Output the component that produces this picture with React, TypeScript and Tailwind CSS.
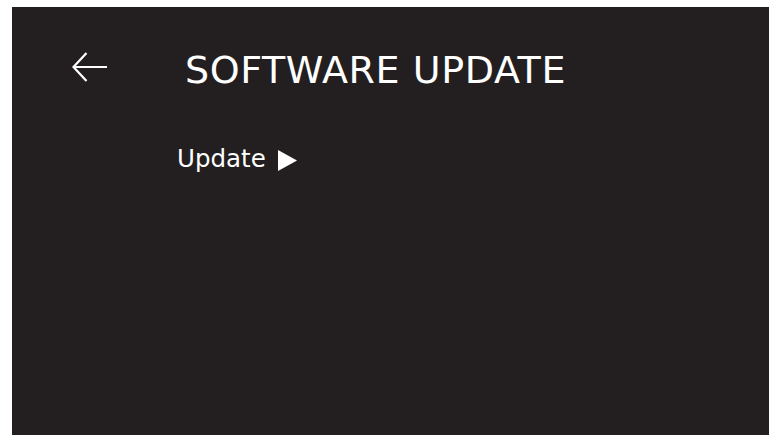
import React from "react";

const App: React.FC = () => {
  return (
    <div className="w-[781px] h-[443px] bg-white pl-[12px] pt-[7px]" style={{ fontFamily: '"DejaVu Sans", sans-serif' }}>
      <div className="w-[757px] h-[428px] bg-[#231f20] text-white pt-[44px]">
        {/* Header */}
        <div className="flex items-start">
          <button className="ml-[60px] mt-0 w-[36px] h-[32px]" aria-label="Back">
            <svg width="36" height="32" viewBox="0 0 36 32" fill="none" stroke="white" strokeWidth="2.2">
              <path d="M35 16H2" />
              <path d="M14.5 2L1.5 16L14.5 30" />
            </svg>
          </button>
          <h1 className="ml-[77px] text-[38px] leading-none font-normal tracking-[0.6px]">SOFTWARE UPDATE</h1>
        </div>

        {/* Menu */}
        <div className="mt-[58px] ml-[165px] flex items-center">
          <span className="text-[24.5px] leading-none">Update</span>
          <svg className="ml-[12px] mt-[2px]" width="19" height="21" viewBox="0 0 19 21" fill="white">
            <path d="M0 0L19 10.5L0 21Z" />
          </svg>
        </div>
      </div>
    </div>
  );
};

export default App;
